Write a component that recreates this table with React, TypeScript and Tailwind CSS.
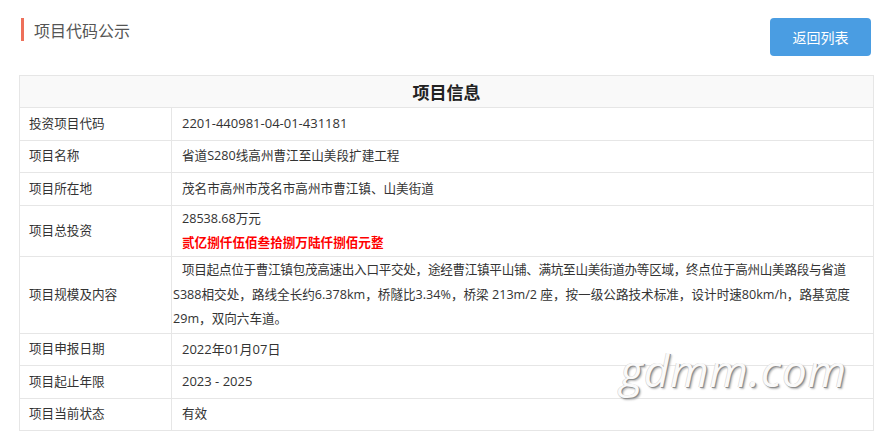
import React from "react";

const font = { fontFamily: '"Noto Sans CJK SC", "Noto Sans", sans-serif' };
const body = { fontFamily: '"Open Sans", "Noto Sans CJK SC", sans-serif' };

function Row({ label, h, children, last, vsize }: { label: string; h: string; children: React.ReactNode; last?: boolean; vsize?: string }) {
  return (
    <div className={`flex ${h} ${last ? "" : "border-b border-[#e6e6e6]"}`}>
      <div className="w-[152px] shrink-0 border-r border-[#e6e6e6] flex items-center pl-[9px] text-[12.6px] text-[#333]">{label}</div>
      <div className={`flex-1 flex items-center pl-[10px] ${vsize ?? "text-[12.6px]"} text-[#333]`}>{children}</div>
    </div>
  );
}

export default function App() {
  return (
    <div className="w-[891px] h-[443px] bg-white relative overflow-hidden" style={font}>
      <div className="flex justify-between items-start pt-[18px] pl-[21px] pr-[20px]">
        <div className="flex items-center h-[23px] border-l-[3px] border-[#ee705a] pl-[10px] text-[16px] text-[#555] leading-none">项目代码公示</div>
        <button className="w-[101px] h-[38px] rounded-[4px] bg-[#4a9de2] text-white text-[14px] leading-none">返回列表</button>
      </div>
      <div className="ml-[19px] mt-[19px] w-[855px] border border-[#e6e6e6]" style={body}>
        <div className="h-[32px] bg-[#f9f9f9] border-b border-[#e6e6e6] flex items-center justify-center text-[17px] font-bold text-[#222]" style={font}>项目信息</div>
        <Row label="投资项目代码" h="h-[33px]" vsize="text-[13px]">2201-440981-04-01-431181</Row>
        <Row label="项目名称" h="h-[32px]">省道S280线高州曹江至山美段扩建工程</Row>
        <Row label="项目所在地" h="h-[33px]">茂名市高州市茂名市高州市曹江镇、山美街道</Row>
        <Row label="项目总投资" h="h-[51px]">
          <div className="leading-[24px]">
            <div>28538.68万元</div>
            <div className="text-[#f00] font-bold">贰亿捌仟伍佰叁拾捌万陆仟捌佰元整</div>
          </div>
        </Row>
        <div className="flex h-[77px] border-b border-[#e6e6e6]">
          <div className="w-[152px] shrink-0 border-r border-[#e6e6e6] flex items-center pl-[9px] text-[12.6px] text-[#333]">项目规模及内容</div>
          <div className="flex-1 pl-[1px] pt-[1px] text-[12.6px] text-[#333] leading-[24.5px] whitespace-nowrap">
            <div className="indent-[9px] tracking-[-0.3px]">项目起点位于曹江镇包茂高速出入口平交处，途经曹江镇平山铺、满坑至山美街道办等区域，终点位于高州山美路段与省道</div>
            <div>S388相交处，路线全长约6.378km，桥隧比3.34%，桥梁 213m/2 座，按一级公路技术标准，设计时速80km/h，路基宽度</div>
            <div>29m，双向六车道。</div>
          </div>
        </div>
        <Row label="项目申报日期" h="h-[32px]" vsize="text-[13px]">2022年01月07日</Row>
        <Row label="项目起止年限" h="h-[33px]" vsize="text-[13px]">2023 - 2025</Row>
        <Row label="项目当前状态" h="h-[31px]" last>有效</Row>
      </div>
      <div
        className="absolute left-[620px] top-[348px] text-[44px] italic font-normal text-[#fafafa] leading-none tracking-[1px]"
        style={{ fontFamily: '"Open Sans", sans-serif', textShadow: "1px 1px 0 #8f8f8f, 2px 2px 2px #b5b5b5, -0.5px -0.5px 0 #d0d0d0" }}
      >
        gdmm.com
      </div>
    </div>
  );
}
